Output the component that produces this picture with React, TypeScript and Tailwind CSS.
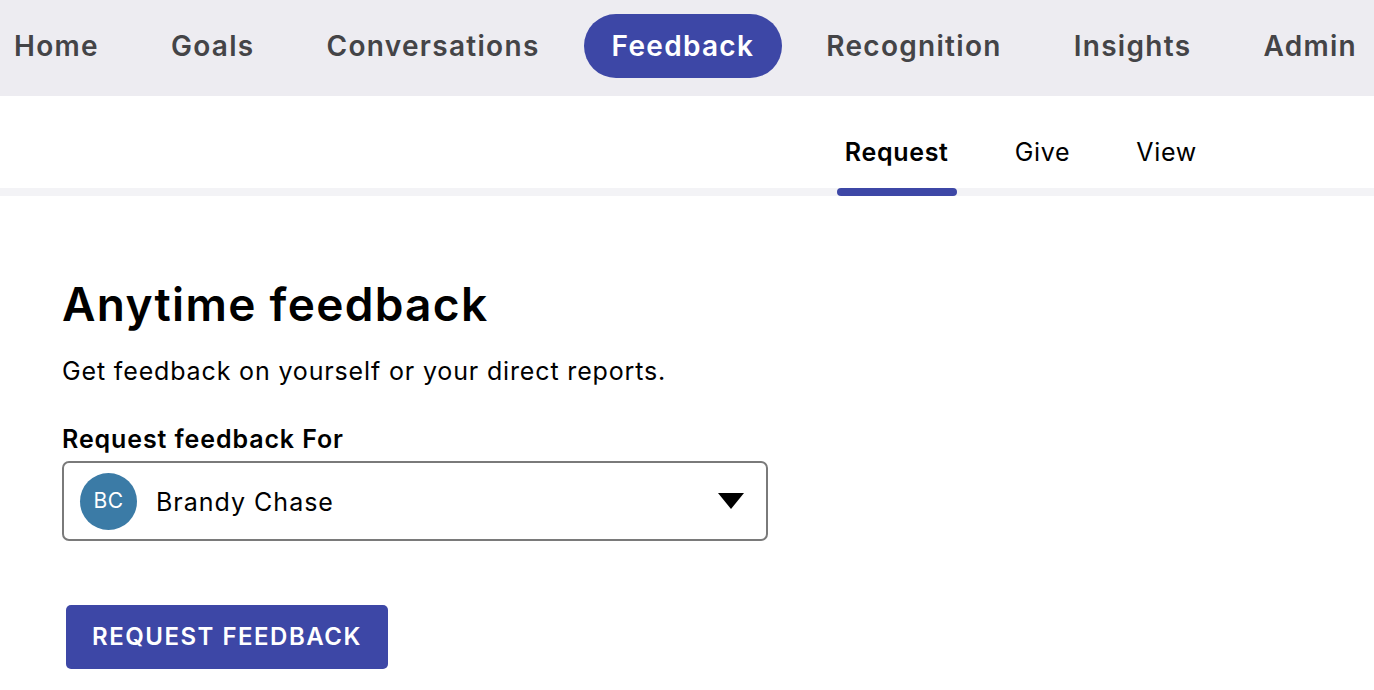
import { useState } from 'react';

const navItems = ['Home', 'Goals', 'Conversations', 'Feedback', 'Recognition', 'Insights', 'Admin'];
const subTabs = ['Request', 'Give', 'View'];

export default function App() {
  const [active, setActive] = useState('Feedback');
  const [tab, setTab] = useState('Request');

  return (
    <main className="min-h-screen bg-white font-['Inter','Noto_Sans',sans-serif] text-black overflow-hidden">
      {/* Top navigation */}
      <nav className="h-[96px] bg-[#edecf1] flex items-start pt-[14px] gap-4 ml-[-14px] whitespace-nowrap">
        {navItems.map((item) => (
          <button
            key={item}
            onClick={() => setActive(item)}
            className={`h-[64px] px-7 rounded-full text-[28px] font-semibold tracking-[1.3px] ${
              active === item ? 'bg-[#3d47a6] text-white' : 'text-[#444447]'
            }`}
          >
            {item}
          </button>
        ))}
      </nav>

      {/* Sub tabs */}
      <div className="h-[100px] border-b-[8px] border-[#f3f3f6] flex justify-end pr-[144px]">
        <div className="flex h-full">
          {subTabs.map((t) => (
            <button
              key={t}
              onClick={() => setTab(t)}
              className={`relative h-full px-2 mx-[25px] text-[25px] tracking-[0.7px] ${tab === t ? 'font-semibold' : 'font-normal'}`}
            >
              <span className="relative top-[11px]">{t}</span>
              {tab === t && (
                <span className="absolute left-0 right-0 bottom-[-8px] h-[8px] rounded-full bg-[#3d47a6]" />
              )}
            </button>
          ))}
        </div>
      </div>

      {/* Content */}
      <section className="pl-[62px] pt-[80px]">
        <h1 className="text-[46px] font-semibold leading-[56px] tracking-[1.3px]">Anytime feedback</h1>
        <p className="mt-[24px] text-[25px] leading-[30px] tracking-[0.85px]">Get feedback on yourself or your direct reports.</p>

        <label className="block mt-[38px] text-[25px] font-semibold leading-[30px] tracking-[0.9px]">Request feedback For</label>
        <button className="mt-[7px] w-[706px] h-[80px] border-2 border-[#7a7a7a] rounded-[7px] flex items-center pl-[16px] pr-[22px]">
          <span className="w-[57px] h-[57px] rounded-full bg-[#3b7ba6] text-white text-[21px] tracking-[0.5px] flex items-center justify-center">
            BC
          </span>
          <span className="ml-[19px] text-[25px] tracking-[1px] relative top-[2px]">Brandy Chase</span>
          <svg className="ml-auto" width="26" height="16" viewBox="0 0 26 16">
            <path d="M0 0 H26 L13 16 Z" fill="#000" />
          </svg>
        </button>

        <button className="mt-[64px] ml-[4px] h-[64px] px-[26px] rounded-[5px] bg-[#3d47a6] text-white text-[24px] font-semibold tracking-[1.5px]">
          REQUEST FEEDBACK
        </button>
      </section>
    </main>
  );
}
